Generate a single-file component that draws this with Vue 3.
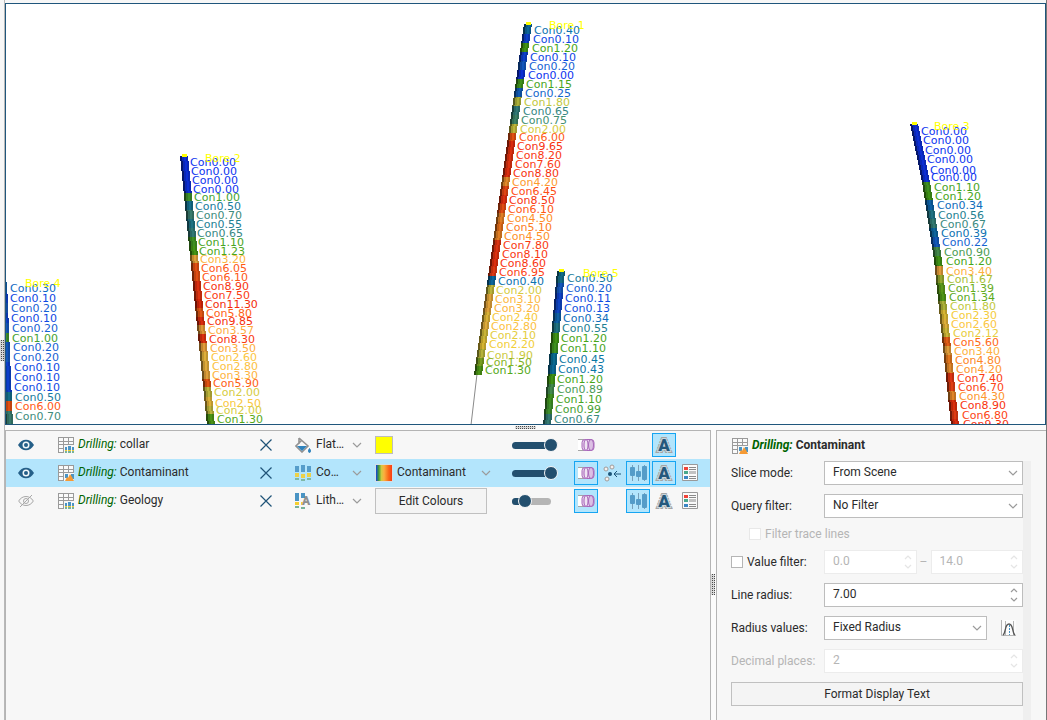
<script setup>
import { ref } from 'vue'

const stops = [
  [0, 14, 52, 240], [0.1, 14, 72, 228], [0.2, 22, 98, 212], [0.35, 14, 110, 186],
  [0.45, 12, 120, 164], [0.55, 34, 128, 148], [0.7, 64, 140, 124], [0.9, 76, 156, 84],
  [1, 70, 162, 48], [1.2, 72, 166, 24], [1.35, 92, 170, 26], [1.5, 134, 180, 36],
  [1.8, 194, 200, 64], [2, 214, 204, 66], [2.2, 242, 206, 56], [2.6, 252, 198, 66],
  [3.5, 254, 174, 64], [4.3, 254, 150, 44], [5.1, 254, 124, 28], [6, 255, 90, 20],
  [7, 252, 62, 20], [9, 248, 50, 16], [12, 242, 42, 10]
]

function colour(value, shade = 1) {
  let i = 1
  while (i < stops.length - 1 && stops[i][0] < value) i++
  const a = stops[i - 1]
  const b = stops[i]
  const t = Math.min(1, Math.max(0, (value - a[0]) / (b[0] - a[0])))
  const c = [1, 2, 3].map(k => Math.round((a[k] + (b[k] - a[k]) * t) * shade))
  return `rgb(${c.join(',')})`
}

const holes = [
  {
    name: 'Bore 1', nx: 549, ny: 29, path: [[528, 24], [478, 375]],
    samples: [
      [534, 30, 0.4], [533, 39, 0.1], [532, 48, 1.2], [530, 57, 0.1], [529, 66, 0.2], [528, 75, 0],
      [526, 84, 1.15], [525, 93, 0.25], [524, 102, 1.8], [523, 111, 0.65], [521, 120, 0.75], [520, 129, 2],
      [519, 137, 6], [517, 146, 9.65], [516, 155, 8.2], [515, 164, 7.6], [513, 173, 8.8], [512, 182, 4.2],
      [511, 191, 6.45], [509, 200, 8.5], [508, 209, 6.1], [507, 218, 4.5], [506, 227, 5.1], [504, 236, 4.5],
      [503, 245, 7.8], [502, 254, 8.1], [500, 263, 8.6], [499, 272, 6.95], [498, 281, 0.4], [496, 290, 2],
      [495, 299, 3.1], [494, 308, 3.2], [492, 317, 2.4], [491, 326, 2.8], [490, 335, 2.1], [489, 344, 2.2],
      [487, 355, 1.9], [486, 362, 1.5], [485, 370, 1.3]
    ]
  },
  {
    name: 'Bore 2', nx: 205, ny: 162, path: [[184, 156], [211, 426]],
    samples: [
      [190, 162, 0], [191, 171, 0], [192, 180, 0], [193, 189, 0], [194, 197, 1], [195, 206, 0.5],
      [196, 215, 0.7], [196, 224, 0.55], [197, 233, 0.65], [198, 242, 1.1], [199, 251, 1.23], [200, 259, 3.2],
      [201, 268, 6.05], [202, 277, 6.1], [203, 286, 8.9], [204, 295, 7.5], [205, 304, 11.3], [206, 313, 5.8],
      [207, 321, 9.85], [208, 330, 3.57], [209, 339, 8.3], [210, 348, 3.5], [211, 357, 2.6], [212, 366, 2.8],
      [212, 375, 3.3], [213, 383, 5.9], [214, 392, 2], [215, 403, 2.5], [216, 410, 2], [217, 419, 1.3]
    ]
  },
  {
    name: 'Bore 3', nx: 934, ny: 130, path: [[914, 124], [926, 182], [938, 260], [955, 426]],
    samples: [
      [921, 131, 0], [923, 140, 0], [925, 150, 0], [927, 159, 0], [930, 170, 0], [931, 177, 0],
      [934, 187, 1.1], [935, 196, 1.2], [937, 205, 0.34], [938, 215, 0.56], [940, 224, 0.67], [941, 233, 0.39],
      [942, 242, 0.22], [944, 252, 0.9], [946, 261, 1.2], [946, 271, 3.4], [947, 279, 1.67], [948, 288, 1.39],
      [949, 297, 1.34], [950, 306, 1.8], [951, 315, 2.3], [951, 324, 2.6], [953, 333, 2.12], [953, 342, 5.6],
      [954, 351, 3.4], [955, 360, 4.8], [956, 369, 4.2], [957, 378, 7.4], [958, 387, 6.7], [959, 396, 4.3],
      [960, 405, 8.9], [962, 415, 6.8], [963, 424, 9.3]
    ]
  },
  {
    name: 'Bore 4', nx: 25, ny: 287, path: [[3, 282], [9, 426]],
    samples: [
      [10, 288, 0.3], [10, 298, 0.1], [11, 308, 0.2], [11, 318, 0.1], [12, 328, 0.2], [12, 338, 1],
      [13, 347, 0.2], [13, 357, 0.2], [14, 367, 0.1], [14, 377, 0.1], [14, 387, 0.1], [15, 397, 0.5],
      [15, 406, 6], [15, 416, 0.7]
    ]
  },
  {
    name: 'Bore 5', nx: 583, ny: 277, path: [[561, 271], [547, 426]],
    samples: [
      [567, 278, 0.5], [566, 288, 0.2], [565, 298, 0.11], [564, 308, 0.13], [563, 318, 0.34], [562, 328, 0.55],
      [561, 338, 1.2], [560, 348, 1.1], [559, 359, 0.45], [558, 369, 0.43], [557, 379, 1.2], [557, 389, 0.89],
      [556, 399, 1.1], [555, 409, 0.99], [554, 419, 0.67]
    ]
  }
]

function xAt(path, y) {
  let i = 1
  while (i < path.length - 1 && path[i][1] < y) i++
  const [x0, y0] = path[i - 1]
  const [x1, y1] = path[i]
  return x0 + (x1 - x0) * (y - y0) / (y1 - y0)
}

function band(x0, y0, x1, y1, left, right) {
  return `${x0 + left},${y0} ${x0 + right},${y0} ${x1 + right},${y1} ${x1 + left},${y1}`
}

const traces = holes.map(hole => {
  const last = hole.path[hole.path.length - 1][1]
  const segments = hole.samples.map(([, y, value], i, all) => {
    const top = i ? Math.floor((all[i - 1][1] + y) / 2) : hole.path[0][1]
    const bottom = i < all.length - 1 ? Math.floor((y + all[i + 1][1]) / 2) : last
    const x0 = xAt(hole.path, top)
    const x1 = xAt(hole.path, bottom)
    return {
      fill: colour(value, 0.88),
      body: band(x0, top, x1, bottom, -4, 4),
      dark: band(x0, top, x1, bottom, -4, -2),
      mid: band(x0, top, x1, bottom, -2, 0),
      edge: band(x0, top, x1, bottom, 2, 4)
    }
  })
  return { ...hole, segments }
})

const layers = ref([
  { name: 'collar', visible: true, icon: 'drill', mode: 'Flat…', modeIcon: 'bucket', opacity: 100, tools: ['tube', '', '', 'label', ''], on: ['label'] },
  { name: 'Contaminant', visible: true, icon: 'chart', mode: 'Co…', modeIcon: 'cores', opacity: 100, selected: true, tools: ['tube', 'points', 'disc', 'label', 'legend'], on: ['tube', 'disc', 'label'] },
  { name: 'Geology', visible: false, icon: 'drill', mode: 'Lith…', modeIcon: 'lith', opacity: 19, tools: ['tube', '', 'disc', 'label', 'legend'], on: ['tube', 'disc'] }
])

const toolNames = { tube: 'Solid cylinders', points: 'Show points', disc: 'Vary radius', label: 'Show text', legend: 'Show legend' }

function toggle(layer, tool) {
  layer.on = layer.on.includes(tool) ? layer.on.filter(t => t !== tool) : [...layer.on, tool]
}

const lineRadius = ref('7.00')
</script>

<template>
  <svg class="defs" aria-hidden="true">
    <symbol id="grid" viewBox="0 0 16 16">
      <rect x="0" y="0" width="16" height="16" fill="#9a9a9a" />
      <path fill="#fafafa" d="M1 1h4v3H1zM6 1h4v3H6zM11 1h4v3h-4zM1 5h4v2H1zM6 5h4v2H6zM11 5h4v2h-4zM1 8h4v3H1zM6 8h4v3H6zM11 8h4v3h-4zM1 12h4v3H1zM6 12h4v3H6zM11 12h4v3h-4z" />
    </symbol>
    <symbol id="drill" viewBox="0 0 16 16">
      <use href="#grid" />
      <path fill="#f7f7f7" d="M6 8h10v8H6z" />
      <path fill="#4a94c4" d="M7 10h2v3H7zM10 9h3v4h-3zM14 10h2v3h-2z" />
      <path fill="#f2cf35" d="M7 13h2v1H7zM10 13h3v1h-3zM14 13h2v1h-2z" />
      <path fill="#78b29b" d="M7 14h2v2H7zM10 14h3v2h-3zM14 14h2v2h-2z" />
    </symbol>
    <symbol id="chart" viewBox="0 0 16 16">
      <use href="#grid" />
      <path fill="#f7f7f7" d="M6 8h10v8H6z" />
      <path fill="#4a94c4" d="M7 9h3v4H7zM13 9h3v5h-3z" />
      <path fill="#f59a35" d="M7 16l2-4 1 1 2-4 2 3 2 4z" />
    </symbol>
    <symbol id="bucket" viewBox="0 0 16 16">
      <path d="M4 1v6M4 1l9 8-6 6-6-6 6-6" fill="none" stroke="#929292" stroke-width="1.600" />
      <path d="M2 9h10l-5 5z" fill="#2f83bd" />
      <path d="M14.500 11.500c1.500 2 1.200 4 0 4s-1.500-2 0-4z" fill="#2f83bd" stroke="#2f83bd" />
    </symbol>
    <symbol id="cores" viewBox="0 0 16 16">
      <g opacity="0.88">
        <path fill="#4a94c4" d="M0 1h4v6H0zM6 0h4v7H6zM12 1h4v6h-4z" />
        <path fill="#f5cf30" d="M0 8h4v4H0zM6 9h4v4H6zM12 8h4v4h-4z" />
        <path fill="#78b29b" d="M0 13h4v2H0zM6 14h4v2H6zM12 13h4v2h-4z" />
      </g>
    </symbol>
    <symbol id="lith" viewBox="0 0 16 16">
      <path fill="#4a94c4" d="M0 0h4v8H0zM6 0h4v5H6z" />
      <path fill="#f5cf30" d="M0 9h4v3H0zM6 9h2v3H6z" />
      <path fill="#78b29b" d="M0 13h4v2H0zM6 14h4v2H6z" />
      <text x="7" y="12" class="glyph" font-size="12" fill="#909090">A</text>
    </symbol>
    <symbol id="tube" viewBox="0 0 18 14">
      <path d="M1 1h6v12H1z" fill="#fff" />
      <path d="M1 1.500h6M1 12.500h6" stroke="#a5a5a5" />
      <rect x="5" y="1.500" width="12" height="11" rx="3" fill="#e4cdea" stroke="#a868ba" />
      <ellipse cx="9" cy="7" rx="2" ry="5.500" fill="#f0e4f3" stroke="#a868ba" />
      <ellipse cx="14" cy="7" rx="2.500" ry="5.500" fill="#dcc0e4" stroke="#a868ba" />
    </symbol>
    <symbol id="points" viewBox="0 0 18 18">
      <g fill="#f5f0ee" stroke="#a09c9a"><circle cx="3" cy="5" r="2" /><circle cx="9" cy="3" r="2" /><circle cx="4" cy="15" r="2" /></g>
      <circle cx="7" cy="10" r="2" fill="#1c5478" />
      <path d="M18 10h-7M14 7l-3 3 3 3" fill="none" stroke="#1c5478" />
    </symbol>
    <symbol id="disc" viewBox="0 0 18 18">
      <g opacity="0.85">
        <path d="M3.500 1v16M9.500 1v16M15.500 1v16" stroke="#6f93ad" />
        <g fill="#4590c0"><rect x="1" y="3" width="5" height="9" rx="1" /><rect x="7" y="7" width="5" height="6" rx="1" /><rect x="13" y="2" width="5" height="14" rx="1" /></g>
      </g>
    </symbol>
    <symbol id="label" viewBox="0 0 18 18">
      <text x="9" y="15" text-anchor="middle" class="glyph" font-size="17" fill="none" stroke="#a5a5a5" stroke-width="4" stroke-dasharray="2 1">A</text>
      <text x="9" y="15" text-anchor="middle" class="glyph" font-size="17" fill="#24587c" stroke="#c9d6dc" stroke-width="2" paint-order="stroke">A</text>
    </symbol>
    <symbol id="legend" viewBox="0 0 18 18">
      <path d="M1.500 .5h15v16h-15z" fill="#fafafa" stroke="#999" />
      <path d="M3 3h4v3H3z" fill="#f04438" /><path d="M3 7h4v3H3z" fill="#48a88c" /><path d="M3 12h4v3H3z" fill="#3b86c4" />
      <path d="M8 3.500h7M8 5.500h7M8 12.500h7M8 14.500h7" stroke="#8a8a8a" /><path d="M8 7h7v3H8z" fill="#c2c2c2" />
    </symbol>
    <symbol id="eye" viewBox="0 0 16 12">
      <path d="M0 6C4-1 12-1 16 6 12 13 4 13 0 6z" fill="#255f88" />
      <circle cx="8" cy="6" r="3.500" fill="#f2f8fb" /><circle cx="8" cy="6" r="2" fill="#255f88" />
    </symbol>
    <symbol id="eye-off" viewBox="0 0 16 12">
      <g fill="none" stroke="#a8a8a8"><path d="M.7 6C4 0 12 0 15.300 6 12 12 4 12 .7 6z" /><circle cx="8" cy="6" r="2.500" /><path d="M2 12L14 0" /></g>
    </symbol>
    <symbol id="cross" viewBox="0 0 12 12"><path d="M.5 .5l11 11M11.500 .5l-11 11" stroke="#1f5378" stroke-width="1.200" /></symbol>
    <symbol id="down" viewBox="0 0 10 6"><path d="M1 1l4 4 4-4" fill="none" stroke="#9b9b9b" stroke-width="1.200" /></symbol>
    <symbol id="spin" viewBox="0 0 8 14"><path d="M1 4l3-3 3 3M1 10l3 3 3-3" fill="none" stroke="#9b9b9b" stroke-width="1.200" /></symbol>
    <symbol id="curve" viewBox="0 0 16 16">
      <path d="M0 0h15v16H0z" fill="#fcfcfc" />
      <path d="M4.500 1v14M12.500 1v14M.5 0v15.500H15" fill="none" stroke="#b5b5b5" />
      <path d="M2 15C5 13 3.500 4 8 4s3 9 6 11" fill="none" stroke="#555" stroke-width="1.300" />
      <path d="M8.500 5v10" stroke="#4590c0" stroke-dasharray="2 1" />
    </symbol>
  </svg>

  <div class="app">
    <div class="gutter"><span class="grip tall"></span></div>
    <main class="main">
      <section class="scene" aria-label="Scene">
        <svg class="view" viewBox="6 4 1039 420" preserveAspectRatio="xMinYMin slice">
          <path d="M477 374L471 425" stroke="#8a8a8a" />
          <g v-for="hole in traces" :key="hole.name">
            <g v-for="(s, i) in hole.segments" :key="i" class="core">
              <polygon :points="s.body" :fill="s.fill" />
              <polygon :points="s.dark" class="dark" />
              <polygon :points="s.mid" class="mid" />
              <polygon :points="s.edge" class="mid" />
            </g>
            <rect :x="hole.path[0][0] - 2" :y="hole.path[0][1] - 2" width="5" height="3" fill="#ff0" />
            <text v-for="([x, y, v], i) in hole.samples" :key="'t' + i" :x="x" :y="y + 4" :fill="colour(v)">Con{{ v.toFixed(2) }}</text>
            <text :x="hole.nx" :y="hole.ny" fill="#ff0">{{ hole.name }}</text>
          </g>
        </svg>
      </section>
      <div class="split-h"><span class="grip wide"></span></div>
      <div class="lower">
        <ul class="layers">
          <li v-for="layer in layers" :key="layer.name" class="layer" :class="{ selected: layer.selected }">
            <button class="bare eye" :aria-label="'Toggle ' + layer.name" @click="layer.visible = !layer.visible">
              <svg width="16" height="12"><use :href="layer.visible ? '#eye' : '#eye-off'" /></svg>
            </button>
            <div class="name">
              <svg width="16" height="16"><use :href="'#' + layer.icon" /></svg>
              <span><em>Drilling:</em> {{ layer.name }}</span>
            </div>
            <button class="bare" :aria-label="'Remove ' + layer.name"><svg width="12" height="12"><use href="#cross" /></svg></button>
            <div class="mode">
              <svg width="16" height="16"><use :href="'#' + layer.modeIcon" /></svg>
              <select :aria-label="layer.name + ' colouring'"><option>{{ layer.mode }}</option></select>
              <svg class="arrow" width="10" height="6"><use href="#down" /></svg>
            </div>
            <div class="colours">
              <button v-if="layer.name === 'collar'" class="swatch" aria-label="Collar colour"></button>
              <div v-else-if="layer.name === 'Contaminant'" class="map">
                <span class="ramp"></span>
                <select aria-label="Colour map"><option>Contaminant</option></select>
                <svg class="arrow" width="10" height="6"><use href="#down" /></svg>
              </div>
              <button v-else class="push edit">Edit Colours</button>
            </div>
            <div class="slider">
              <span class="track"><span class="fill" :style="{ width: layer.opacity + '%' }"></span></span>
              <input v-model="layer.opacity" type="range" min="0" max="100" :aria-label="layer.name + ' opacity'">
            </div>
            <div class="tools">
              <template v-for="(tool, i) in layer.tools" :key="i">
                <button v-if="tool" class="tool" :class="{ on: layer.on.includes(tool) }" :aria-label="toolNames[tool]" @click="toggle(layer, tool)">
                  <svg width="18" height="18"><use :href="'#' + tool" /></svg>
                </button>
                <span v-else></span>
              </template>
            </div>
          </li>
        </ul>
        <div class="split-v"><span class="grip tall"></span></div>
        <section class="props">
          <h2><svg width="16" height="16"><use href="#chart" /></svg><span><em>Drilling:</em> Contaminant</span></h2>
          <form class="form" @submit.prevent>
            <div class="row">
              <label for="slice">Slice mode:</label>
              <div class="field"><select id="slice"><option>From Scene</option></select><svg class="arrow" width="10" height="6"><use href="#down" /></svg></div>
            </div>
            <div class="row">
              <label for="query">Query filter:</label>
              <div class="field"><select id="query"><option>No Filter</option></select><svg class="arrow" width="10" height="6"><use href="#down" /></svg></div>
            </div>
            <label class="check indent off"><input type="checkbox" disabled>Filter trace lines</label>
            <div class="row">
              <label class="check"><input type="checkbox">Value filter:</label>
              <div class="range">
                <div class="field off"><input value="0.0" aria-label="Minimum value" disabled><svg class="spin" width="8" height="14"><use href="#spin" /></svg></div>
                <span class="dash">–</span>
                <div class="field off"><input value="14.0" aria-label="Maximum value" disabled><svg class="spin" width="8" height="14"><use href="#spin" /></svg></div>
              </div>
            </div>
            <div class="row">
              <label for="radius">Line radius:</label>
              <div class="field"><input id="radius" v-model="lineRadius"><svg class="spin" width="8" height="14"><use href="#spin" /></svg></div>
            </div>
            <div class="row">
              <label for="values">Radius values:</label>
              <div class="with-icon">
                <div class="field"><select id="values"><option>Fixed Radius</option></select><svg class="arrow" width="10" height="6"><use href="#down" /></svg></div>
                <button class="bare" aria-label="Radius curve"><svg width="16" height="16"><use href="#curve" /></svg></button>
              </div>
            </div>
            <div class="row off">
              <label for="places">Decimal places:</label>
              <div class="field off"><input id="places" value="2" disabled><svg class="spin" width="8" height="14"><use href="#spin" /></svg></div>
            </div>
            <button class="push format">Format Display Text</button>
          </form>
        </section>
      </div>
    </main>
  </div>
</template>

<style>
body { background: #f7f7f7; }
</style>

<style scoped>
* { box-sizing: border-box; }
.defs { position: absolute; width: 0; height: 0; }
.glyph { font-family: "Roboto", "Liberation Sans", sans-serif; font-weight: 900; }
.app { display: flex; height: 100vh; min-height: 600px; border-right: 1px solid #777; background: #f7f7f7; color: #2b2b2b; font: 12px/16px "Roboto", "Liberation Sans", sans-serif; overflow: hidden; }
svg { display: block; flex: none; }
button, input, select { font: inherit; color: inherit; margin: 0; }
button { cursor: pointer; }
select { appearance: none; min-width: 0; padding: 0; border: 0; background: none; outline: none; }
em { color: #006400; }

.gutter { width: 5px; flex: none; display: flex; align-items: center; border-right: 1px solid #b8b8b8; padding-bottom: 20px; }
.main { flex: 1; min-width: 0; display: grid; grid-template-rows: minmax(0, 422fr) 5px minmax(0, 290fr); padding-top: 3px; }
.scene { min-height: 0; border: 1px solid #1f567c; background: #fff; overflow: hidden; }
.view { width: 100%; height: 100%; font: 11px "DejaVu Sans", sans-serif; }
.core { shape-rendering: crispEdges; }
.dark { fill: #000; opacity: 0.5; }
.mid { fill: #000; opacity: 0.14; }

.grip { display: block; background: conic-gradient(#4a4a4a 25%, #d8d8d8 0) 0 0 / 2px 2px; }
.grip.tall { width: 4px; height: 21px; }
.grip.wide { width: 21px; height: 3px; }
.split-h { display: flex; align-items: center; justify-content: center; background: #fbfbfb; }
.split-v { width: 5px; flex: none; padding-top: 144px; background: #fbfbfb; }

.lower { display: flex; min-width: 0; }
.layers { flex: 1; min-width: 0; margin: 0; padding: 0; list-style: none; border: 1px solid #b4b4b4; border-bottom: 0; }
.layer { display: grid; grid-template-columns: 52px minmax(100px, 1fr) 35px 80px 137px 62px 130px 6px; align-items: center; height: 28px; }
.layer.selected { background: #b3e5fc; }
.bare { display: flex; padding: 0; border: 0; background: none; }
.eye { padding-left: 12px; }
.name, .mode, .map { display: flex; align-items: center; white-space: nowrap; }
.name { gap: 4px; }
.name span, h2 span { padding-bottom: 2px; }
.mode select { width: 34px; margin-left: 5px; padding-bottom: 2px; }
.mode .arrow { margin-left: 2px; }
.swatch { width: 18px; height: 18px; padding: 0; border: 1px solid #bdbdbd; background: #ff0; display: block; }
.ramp { width: 18px; height: 18px; border: 1px solid #d3dfe4; background: linear-gradient(90deg, #1040e0, #46a030 18%, #d2c940 34%, #fbb040 50%, #fa6a18 78%, #fa3c14); }
.map select { width: 80px; margin-left: 4px; padding-bottom: 2px; }
.map .arrow { margin-left: 4px; }
.push { border: 1px solid #c0c0c0; background: #f4f4f4; padding: 0; }
.edit { width: 112px; height: 26px; }
.slider { display: grid; align-items: center; width: 46px; }
.slider > * { grid-area: 1 / 1; }
.track { width: 39px; height: 7px; border-radius: 4px; background: #b5b5b5; overflow: hidden; }
.fill { display: block; height: 100%; background: #234f6e; }
.slider input { appearance: none; width: 46px; height: 14px; background: none; }
.slider input::-webkit-slider-thumb { appearance: none; width: 14px; height: 14px; border-radius: 50%; border: 1px solid #f7f7f7; background: #234f6e; }
.tools { display: grid; grid-template-columns: repeat(5, 26px); }
.tool { display: grid; place-items: center; width: 24px; height: 24px; padding: 0; border: 1px solid transparent; background: none; }
.tool.on { border-color: #16a5f2; background: #b3e5fc; }

.props { width: 330px; flex: none; display: flex; flex-direction: column; border: 1px solid #b4b4b4; border-width: 1px 0 0 1px; padding: 0 15px 0 14px; }
h2 { display: flex; align-items: center; gap: 4px; margin: 0; height: 30px; font-size: 12px; line-height: 16px; font-weight: 700; padding-left: 1px; }
.form { flex: 1; display: flex; flex-direction: column; gap: 9px; border-right: 8px solid #efefef; }
.row { display: grid; grid-template-columns: 93px 1fr; align-items: center; flex: none; }
.field { position: relative; display: flex; align-items: center; min-width: 0; height: 24px; border: 1px solid #bdbdbd; background: #fff; }
.field select, .field input { width: 100%; height: 100%; border: 0; outline: 0; background: none; padding: 0 20px 2px 8px; }
.field .arrow { position: absolute; right: 4px; pointer-events: none; }
.field .spin { position: absolute; right: 4px; pointer-events: none; }
.off { color: #b5b5b5; }
.field.off { border-color: #ececec; }
.field.off .spin { opacity: 0.25; }
.check { display: flex; align-items: center; gap: 4px; white-space: nowrap; }
.check input { appearance: none; width: 12px; height: 12px; flex: none; border: 1px solid #b5b5b5; background: #fff; }
.check.off input { border-color: #e8e8e8; }
.indent { padding-left: 18px; height: 14px; flex: none; }
.range { display: grid; grid-template-columns: 1fr 14px 1fr; align-items: center; }
.dash { text-align: center; color: #b5b5b5; }
.with-icon { display: grid; grid-template-columns: 1fr 22px; gap: 14px; align-items: center; }
.format { height: 24px; flex: none; }
</style>
